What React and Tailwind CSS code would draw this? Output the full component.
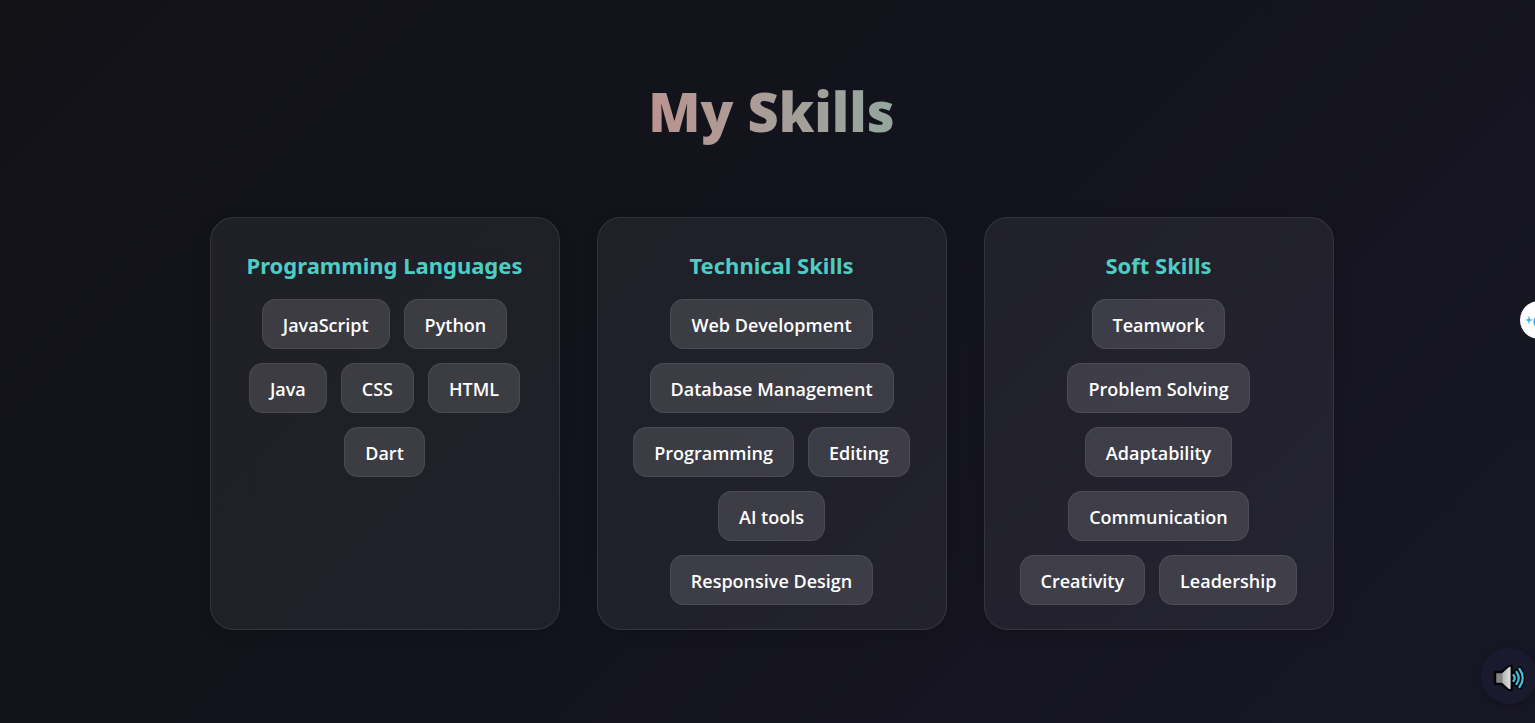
const groups = [
  {
    title: "Programming Languages",
    skills: ["JavaScript", "Python", "Java", "CSS", "HTML", "Dart"],
  },
  {
    title: "Technical Skills",
    skills: ["Web Development", "Database Management", "Programming", "Editing", "AI tools", "Responsive Design"],
  },
  {
    title: "Soft Skills",
    skills: ["Teamwork", "Problem Solving", "Adaptability", "Communication", "Creativity", "Leadership"],
  },
];

function SkillCard({ title, skills }) {
  return (
    <section className="rounded-3xl border border-white/9 bg-white/6 px-7 pt-[31px] pb-6 shadow-[0_4px_16px_rgba(0,0,0,0.12)]">
      <h2 className="mb-[18px] text-center font-['Noto_Sans',sans-serif] text-[22px] leading-8 font-bold whitespace-nowrap text-[#4ecdc4]">
        {title}
      </h2>
      <ul className="flex flex-wrap justify-center gap-[14px]">
        {skills.map((skill) => (
          <li
            key={skill}
            className="rounded-[14px] border border-white/8 bg-white/13 px-5 pt-[11px] pb-[9px] text-lg leading-7 font-semibold whitespace-nowrap text-white"
          >
            {skill}
          </li>
        ))}
      </ul>
    </section>
  );
}

function SpeakerIcon() {
  return (
    <svg viewBox="0 0 32 28" className="h-7 w-8" aria-hidden="true">
      <defs>
        <linearGradient id="cone" x1="0" x2="1">
          <stop offset="0" stopColor="#b4b4b4" />
          <stop offset="1" stopColor="#dedede" />
        </linearGradient>
      </defs>
      <path d="M20.500 10q3 4 0 8M24 7q5 7 0 14M27 5q6 9 0 18" fill="none" stroke="#050507" strokeWidth="5" strokeLinecap="round" />
      <path d="M2 8h7l7-6h2.500v24H16l-7-6H2z" fill="#858585" stroke="#050507" strokeWidth="2.500" strokeLinejoin="round" />
      <path d="M9.500 9L16 3h1.500v22H16l-6.500-6z" fill="url(#cone)" />
      <path d="M20.500 11q2.500 3 0 6M23.500 8q4.500 6 0 12M26.500 5q6.500 9 0 18" fill="none" stroke="#45bddb" strokeWidth="2.200" strokeLinecap="round" />
    </svg>
  );
}

export default function App() {
  return (
    <div className="min-h-screen overflow-x-hidden bg-linear-135 from-[#121217] via-[#13131d] to-[#181725] font-['Open_Sans','Noto_Sans',sans-serif]">
      <main className="pt-[69px] pr-6 pb-16 pl-8">
        <h1 className="mx-auto w-fit bg-linear-to-r from-[#ba9490] to-[#94a69f] bg-clip-text font-['Noto_Sans',sans-serif] text-[54px] leading-[84px] font-black text-transparent">
          My Skills
        </h1>
        <div className="mx-auto mt-16 grid max-w-[1124px] grid-cols-1 gap-[37px] lg:grid-cols-3">
          {groups.map((group) => (
            <SkillCard key={group.title} {...group} />
          ))}
        </div>
      </main>

      <button
        type="button"
        aria-label="Open assistant"
        className="fixed top-[301px] -right-[23px] flex size-[38px] items-center rounded-full bg-white pl-[5px]"
      >
        <svg viewBox="0 0 28 28" className="size-7" aria-hidden="true">
          <path d="M4 9.500l1 3.500 3 1-3 1-1 3.500-1-3.500-3-1 3-1z" fill="#49b1e5" />
          <circle cx="17" cy="16" r="6.500" fill="none" stroke="#2f9be0" strokeWidth="4" />
        </svg>
      </button>

      <button
        type="button"
        aria-label="Toggle sound"
        className="fixed -right-0.5 bottom-[19px] flex size-14 items-center justify-center rounded-full bg-[#1a1a2e] pt-1 shadow-[0_2px_10px_rgba(0,0,0,0.25)]"
      >
        <SpeakerIcon />
      </button>
    </div>
  );
}
